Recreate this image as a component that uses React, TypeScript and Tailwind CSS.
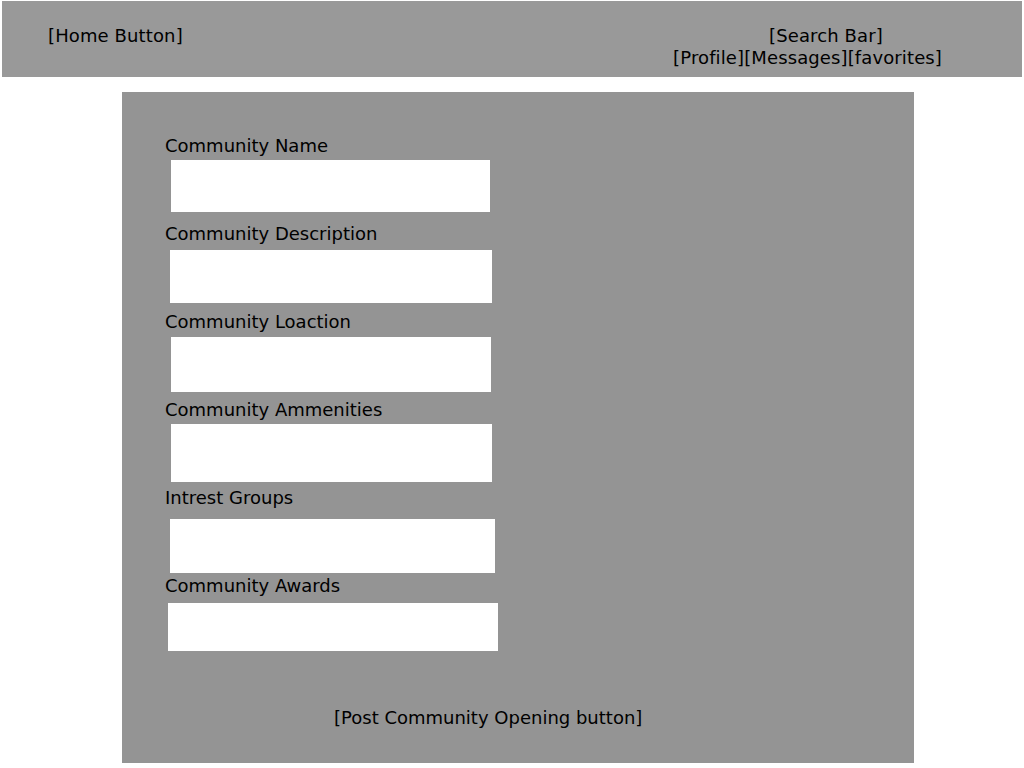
const fields = [
  { label: "Community Name", labelClass: "mt-0", boxClass: "mt-[4px] ml-[6px] w-[319px] h-[52px]" },
  { label: "Community Description", labelClass: "mt-[11px]", boxClass: "mt-[6px] ml-[5px] w-[322px] h-[53px]" },
  { label: "Community Loaction", labelClass: "mt-[8px]", boxClass: "mt-[5px] ml-[6px] w-[320px] h-[55px]" },
  { label: "Community Ammenities", labelClass: "mt-[7px]", boxClass: "mt-[4px] ml-[6px] w-[321px] h-[58px]" },
  { label: "Intrest Groups", labelClass: "mt-[5px]", boxClass: "mt-[11px] ml-[5px] w-[325px] h-[54px]" },
  { label: "Community Awards", labelClass: "mt-[2px]", boxClass: "mt-[7px] ml-[3px] w-[330px] h-[48px]" },
]

export default function App() {
  return (
    <div className="w-[1024px] h-[768px] bg-white text-[18px] leading-[21px] text-black font-['DejaVu_Sans',sans-serif]">
      {/* top bar */}
      <div className="ml-[2px] pt-[1px]">
        <div className="flex w-[1020px] h-[76px] bg-[#999999] pt-[24px] tracking-[0.12px]">
          <div className="pl-[46px]">[Home Button]</div>
          <div className="ml-auto mr-[80px] flex flex-col">
            <span className="ml-[96px]">[Search Bar]</span>
            <span className="mt-[1px]">[Profile][Messages][favorites]</span>
          </div>
        </div>
      </div>

      {/* form panel */}
      <div className="ml-[122px] mt-[15px] w-[792px] h-[671px] bg-[#949494] pt-[43px] pl-[43px]">
        {fields.map((f) => (
          <div key={f.label}>
            <div className={f.labelClass}>{f.label}</div>
            <div className={"bg-white " + f.boxClass} />
          </div>
        ))}
        <div className="mt-[56px] pl-[169px]">[Post Community Opening button]</div>
      </div>
    </div>
  )
}
